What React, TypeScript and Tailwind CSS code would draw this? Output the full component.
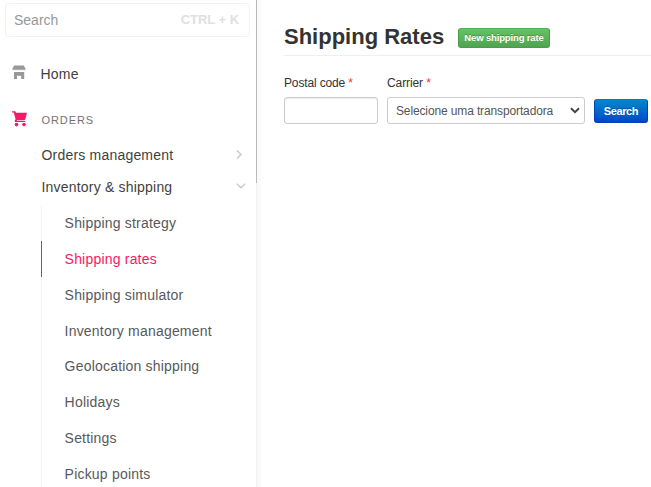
import React from "react";

const items = [
  "Shipping strategy",
  "Shipping rates",
  "Shipping simulator",
  "Inventory management",
  "Geolocation shipping",
  "Holidays",
  "Settings",
  "Pickup points",
];

function Sidebar() {
  return (
    <aside className="w-[257px] shrink-0 text-[14px] tracking-[0.2px] text-[#3f3f40]">
      <div className="mt-[3px] ml-[5px] flex h-[34px] w-[245px] items-center justify-between rounded-[4px] border border-[#f2f2f3] pr-[10px] pl-[8px]">
        <span className="tracking-normal text-[#979899]">Search</span>
        <span className="mb-[1px] text-[13px] font-bold tracking-[-0.05px] text-[#e0e0e1]">CTRL + K</span>
      </div>

      <div className="mt-[26px] flex h-[22px] items-center">
        <svg className="mb-[4px] ml-3 h-[14px] w-[14px] shrink-0" viewBox="0 0 14 14" fill="#979899">
          <path d="M2 0h10v1H2z" opacity=".5" />
          <path d="M2 1h10l1.5 2.5v1.2H.5V3.5z" />
          <path d="M.5 4.7h13v.6H.5z" opacity=".4" />
          <path d="M2 7h10.2v7H9.2v-3.2H5V14H2z" />
        </svg>
        <span className="ml-[14.5px]">Home</span>
      </div>

      <div className="mt-[24px] flex h-[22px] items-center">
        <svg className="mb-[2px] ml-3 h-[16px] w-[15px] shrink-0" viewBox="0 0 15 16" fill="#f71963">
          <path d="M0 .2h3.3l.7 1.5h11l-1.8 6.8-1 .7H5.2l-.7.8h8.7v1H3.3l-.8-1 1.1-1.9L1.7 1.6H0z" />
          <circle cx="4.5" cy="13.6" r="1.8" />
          <circle cx="12" cy="13.6" r="1.8" />
        </svg>
        <span className="mt-[1px] ml-[14.5px] text-[11px] tracking-[0.9px] text-[#727273]">ORDERS</span>
      </div>

      <div className="mt-[8px] flex h-8 items-center justify-between pr-[14px] pl-[41.5px]">
        <span>Orders management</span>
        <svg className="mb-[1px] h-[9px] w-[7px]" viewBox="0 0 7 9" fill="none" stroke="#cacbcc" strokeWidth="1.5">
          <path d="M1 .5l4 4-4 4" />
        </svg>
      </div>
      <div className="flex h-8 items-center justify-between pr-[11px] pl-[41.5px]">
        <span>Inventory &amp; shipping</span>
        <svg className="mb-[3px] h-[6px] w-[10px]" viewBox="0 0 10 6" fill="none" stroke="#cacbcc" strokeWidth="1.5">
          <path d="M.8 .7L5 4.7 9.2 .7" />
        </svg>
      </div>

      <ul className="mt-[2px] ml-[41px]">
        {items.map((item) => (
          <li
            key={item}
            className={
              item === "Shipping rates"
                ? "flex h-[35.85px] items-center border-l border-[#d12c65] pt-[1.1px] pl-[22.6px] text-[#f71963]"
                : "flex h-[35.85px] items-center border-l border-[#f2f2f3] pt-[1.1px] pl-[22.6px] text-[#58595b]"
            }
          >
            {item}
          </li>
        ))}
      </ul>
    </aside>
  );
}

export default function App() {
  return (
    <div className="flex h-[487px] w-[651px] overflow-hidden bg-white font-['Liberation_Sans',Arial,sans-serif]">
      <Sidebar />
      <div className="w-1 shrink-0 bg-[#fafafa]">
        <div className="-ml-px h-[183px] w-px bg-[#b9b9b9]" />
        <div className="-ml-px h-[304px] w-px bg-[#f2f2f3]" />
      </div>

      <main className="ml-[23px] min-w-0 flex-1 text-[#333]">
        <header className="flex h-[56px] items-start border-b border-[#eee] pt-[19px]">
          <h1 className="w-[174px] text-[22px] leading-[35px] font-bold whitespace-nowrap">Shipping Rates</h1>
          <button className="mt-[9px] flex h-5 w-[92px] items-center justify-center rounded-[3px] border border-[#4a9c4a] border-t-[#57ad57] bg-linear-to-b from-[#62c462] to-[#51a351] text-[9.5px] font-bold tracking-[-0.15px] whitespace-nowrap text-white text-shadow-[0_-1px_0_rgba(0,0,0,0.25)]">
            New shipping rate
          </button>
        </header>

        <form className="mt-[18px] flex items-start text-[12px]">
          <div className="w-[94px]">
            <label className="block h-[23px] leading-[18px] tracking-[-0.15px]">
              Postal code <span className="text-[#f33]">*</span>
            </label>
            <div className="h-[27px] rounded-[3px] border border-[#ccc] shadow-[inset_0_1px_1px_rgba(0,0,0,0.075)]" />
          </div>
          <div className="ml-[9px] w-[198px]">
            <label className="block h-[23px] leading-[18px] tracking-[-0.1px]">
              Carrier <span className="text-[#f33]">*</span>
            </label>
            <div className="flex h-[27px] items-center justify-between rounded-[3px] border border-[#ccc] pr-[4px] pl-[8px] text-[#555]">
              <span className="tracking-[-0.13px] whitespace-nowrap">Selecione uma transportadora</span>
              <svg className="mb-[1px] h-[7px] w-[10px]" viewBox="0 0 10 7" fill="none" stroke="#444" strokeWidth="2">
                <path d="M1 1.2l4 4 4-4" />
              </svg>
            </div>
          </div>
          <button
            type="button"
            className="mt-[25px] ml-[9px] flex h-6 w-[54px] items-center justify-center rounded-[3px] border border-[#0043b8] border-t-[#0878bd] bg-linear-to-b from-[#0088cc] to-[#0044cc] text-[11px] font-bold tracking-[-0.4px] text-white text-shadow-[0_-1px_0_rgba(0,0,0,0.25)]"
          >
            Search
          </button>
        </form>
      </main>
    </div>
  );
}
